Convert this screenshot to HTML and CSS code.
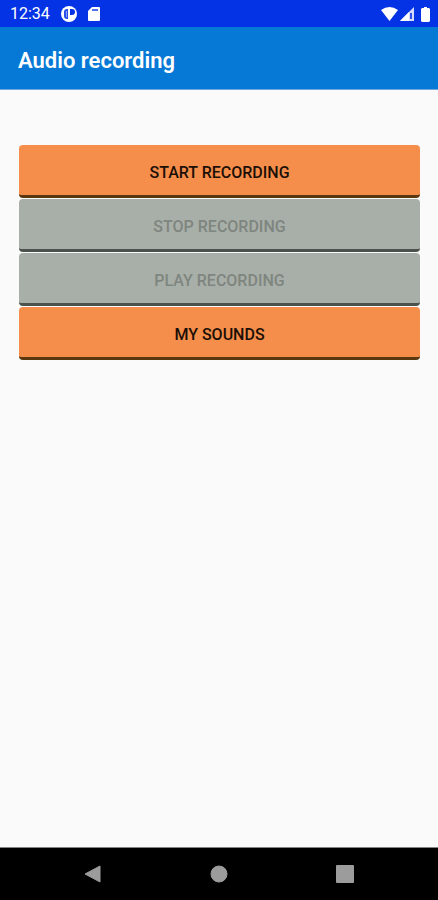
FILE: index.html
```
<!doctype html>
<html lang="en">
<head>
	<meta charset="UTF-8">
	<meta name="viewport" content="width=device-width, initial-scale=1">
	<title>Audio recording</title>
	<link rel="stylesheet" href="styles.css">
</head>
<body>
<div class="status">
	<span class="time">12:34</span>
	<svg class="app-icon" width="16" height="16" viewBox="0 0 16 16" aria-hidden="true">
		<circle cx="8" cy="8" r="8" fill="#fff"/>
		<path d="M7 3v10H6a3 3 0 0 1-3-3V6a3 3 0 0 1 3-3z" fill="#2a4deb"/>
		<path d="M5 5h1v6H5z" fill="#8fa4f4"/>
		<path d="M9 3h2a3 3 0 0 1 0 6H9z" fill="#0433e6"/>
	</svg>
	<svg width="12" height="14" viewBox="0 0 12 14" aria-hidden="true">
		<path d="M4 0h7a1 1 0 0 1 1 1v12a1 1 0 0 1-1 1H1a1 1 0 0 1-1-1V4z" fill="#fff"/>
		<path d="M4 2h6v2H4z" fill="#5470ee"/>
	</svg>
	<div class="signals">
		<svg width="17" height="14" viewBox="0 0 17 14" aria-hidden="true">
			<path d="M0 3Q8.500-3 17 3L8.500 14z" fill="#fff"/>
		</svg>
		<svg width="14" height="14" viewBox="0 0 14 14" aria-hidden="true">
			<path d="M14 0v14H0z" fill="#d5dcfb"/>
			<path d="M9 5v9H0z" fill="#fff"/>
			<path d="M10 6h2v6h-2z" fill="#3153ea"/>
		</svg>
		<svg class="battery" width="9" height="15" viewBox="0 0 9 15" aria-hidden="true">
			<path d="M3 0h3v1h2l1 1v12l-1 1H1l-1-1V2l1-1h2z" fill="#fff"/>
		</svg>
	</div>
</div>

<header class="toolbar">
	<h1>Audio recording</h1>
</header>

<main class="main">
	<button type="button" class="button">START RECORDING</button>
	<button type="button" class="button" disabled>STOP RECORDING</button>
	<button type="button" class="button" disabled>PLAY RECORDING</button>
	<button type="button" class="button">MY SOUNDS</button>
</main>

<nav class="navbar">
	<button type="button" aria-label="Back">
		<svg width="18" height="18" viewBox="0 0 18 18"><path d="M16 1v16L1 9z" fill="#9c9c9c" stroke="#9c9c9c" stroke-linejoin="round"/></svg>
	</button>
	<button type="button" aria-label="Home">
		<svg width="18" height="18" viewBox="0 0 18 18"><circle cx="9" cy="9" r="8" fill="#9c9c9c" stroke="#9c9c9c"/></svg>
	</button>
	<button type="button" aria-label="Recent apps">
		<svg width="18" height="18" viewBox="0 0 18 18"><rect width="18" height="18" rx="1" fill="#9c9c9c"/></svg>
	</button>
</nav>
</body>
</html>
```

FILE: styles.css
```
*{
	box-sizing: border-box;
}
body{
	margin: 0;
	min-height: 100vh;
	display: flex;
	flex-direction: column;
	background: #fafafa;
	font-family: Roboto, "Liberation Sans", sans-serif;
}
svg{
	display: block;
}
.status{
	display: flex;
	align-items: center;
	height: 27px;
	padding: 1px 8px 0 10px;
	background: #0433e6;
	color: #fff;
}
.time{
	font-size: 16px;
	line-height: 26px;
}
.app-icon{
	margin: 0 11px;
}
.signals{
	display: flex;
	align-items: center;
	gap: 2px;
	margin-left: auto;
}
.battery{
	margin-left: 5px;
}
.toolbar{
	display: flex;
	align-items: center;
	height: 63px;
	padding: 4px 18px 0;
	background: #0678d6;
	border-bottom: 1px solid #6fa9e0;
	color: #fff;
}
.toolbar h1{
	margin: 0;
	font-size: 22px;
	font-weight: 600;
}
.main{
	flex: 1;
	display: flex;
	flex-direction: column;
	gap: 1px;
	padding: 55px 18px 24px 19px;
}
.button{
	height: 53px;
	padding: 4px 0 0;
	border: 0;
	border-bottom: 3px solid #593810;
	border-radius: 4px;
	background: #f58e4b;
	color: #1c0f05;
	font-family: inherit;
	font-size: 16px;
	font-weight: 500;
}
.button:disabled{
	border-bottom-color: #4b524b;
	background: #a8afa8;
	color: #7f857f;
}
.navbar{
	display: flex;
	justify-content: center;
	height: 53px;
	background: #000;
	border-top: 1px solid #858585;
}
.navbar button{
	display: flex;
	align-items: center;
	justify-content: center;
	width: 126px;
	padding: 0;
	border: 0;
	background: none;
}
```
